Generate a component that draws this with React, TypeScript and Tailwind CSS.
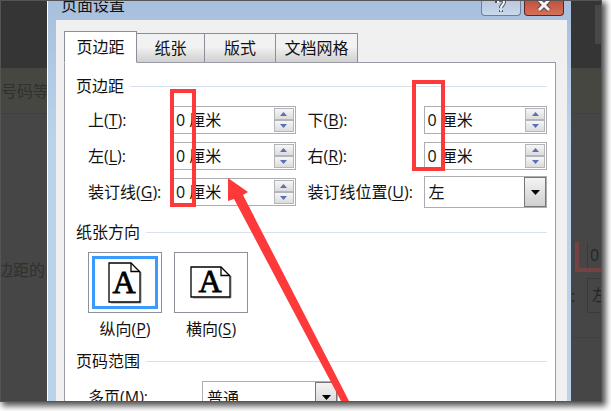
import { useState, type ReactNode } from "react";

const FONT = "font-['Open_Sans','Noto_Sans_CJK_SC',sans-serif]";

function KeyLabel({ text, hot, colon = true }: { text: string; hot: string; colon?: boolean }) {
  return (
    <>
      {text}(<span className="underline underline-offset-2">{hot}</span>){colon ? ":" : ""}
    </>
  );
}

function Heading({ children }: { children: ReactNode }) {
  return (
    <div className="flex h-5 items-center gap-1.5">
      <h2 className="shrink-0">{children}</h2>
      <span className="h-px flex-1 bg-[#d9e2ea]" />
    </div>
  );
}

function StepButton({ up, name }: { up?: boolean; name: string }) {
  return (
    <button
      type="button"
      aria-label={name}
      className="flex flex-1 items-center justify-center border border-[#b4b5b8] bg-linear-to-b from-[#f6f6f6] to-[#dcdcde]"
    >
      <svg width="7" height="4" viewBox="0 0 7 4" fill="#5b6fb5">
        <path d={up ? "M3.5 0 7 4H0z" : "M0 0h7L3.5 4z"} />
      </svg>
    </button>
  );
}

function Spinner({ id }: { id: string }) {
  return (
    <div className="flex h-7 min-w-0 border border-[#abadb3] bg-white p-px">
      <input id={id} defaultValue="0 厘米" className="w-0 min-w-0 flex-1 bg-transparent pl-0.5 leading-6 outline-none" />
      <div className="flex w-5 shrink-0 flex-col">
        <StepButton up name="增加" />
        <StepButton name="减少" />
      </div>
    </div>
  );
}

function Dropdown({ id, value, options }: { id: string; value: string; options: string[] }) {
  return (
    <div className="relative h-8 border border-[#abadb3] bg-white">
      <select id={id} defaultValue={value} className="h-full w-full appearance-none bg-transparent pl-1 leading-6 outline-none">
        {options.map((o) => (
          <option key={o}>{o}</option>
        ))}
      </select>
      <span className="pointer-events-none absolute inset-y-0 right-0 flex w-[22px] items-center justify-center border border-[#777] bg-linear-to-b from-[#f4f4f4] to-[#cfcfcf]">
        <svg width="9" height="5" viewBox="0 0 9 5">
          <path d="M0 0h9L4.5 5z" />
        </svg>
      </span>
    </div>
  );
}

function PageIcon({ wide }: { wide?: boolean }) {
  const w = wide ? 42 : 34;
  const h = wide ? 33 : 42;
  return (
    <svg width={w} height={h} viewBox={`0 0 ${w} ${h}`} fill="none">
      <path d={`M3 ${h - 1}H${w - 1}V10`} stroke="#999" />
      <path d={`M1 1H${w - 11}L${w - 2} 10V${h - 2}H1z`} fill="#fff" stroke="#000" strokeWidth="1.3" />
      <path d={`M${w - 11} 1V9.500H${w - 2}`} stroke="#000" strokeWidth="1.3" />
      <text
        x={w / 2 - 1}
        y={wide ? 26 : 31}
        textAnchor="middle"
        fontSize="32"
        fill="#000"
        stroke="#000"
        strokeWidth="0.8"
        className="font-['Liberation_Serif',serif]"
      >
        A
      </text>
    </svg>
  );
}

function Orientation({ wide, selected, text, hot, onPick }: { wide?: boolean; selected: boolean; text: string; hot: string; onPick: () => void }) {
  return (
    <button type="button" aria-pressed={selected} onClick={onPick} className="flex w-[74px] flex-col items-center gap-1.5">
      <span className="flex h-[61px] w-full border border-[#8e9199] p-[3px]">
        <span className={`flex flex-1 items-center justify-center border-[3px] ${selected ? "border-[#3a9bfd]" : "border-transparent"}`}>
          <PageIcon wide={wide} />
        </span>
      </span>
      <span className="h-5 leading-5">
        <KeyLabel text={text} hot={hot} colon={false} />
      </span>
    </button>
  );
}

function Tab({ text, width, active, onPick }: { text: string; width: string; active: boolean; onPick: () => void }) {
  return (
    <button
      type="button"
      role="tab"
      aria-selected={active}
      onClick={onPick}
      className={`${width} border border-[#8b8e98] ${
        active ? "-mb-px h-8 border-b-white bg-white" : "h-[29px] border-b-0 border-l-0 bg-linear-to-b from-[#f2f2f2] from-45% to-[#d0d0d0]"
      }`}
    >
      {text}
    </button>
  );
}

const TABS = [
  { text: "页边距", width: "w-[73px]" },
  { text: "纸张", width: "w-[68px]" },
  { text: "版式", width: "w-[71px]" },
  { text: "文档网格", width: "w-[82px]" },
];

export default function App() {
  const [tab, setTab] = useState("页边距");
  const [wide, setWide] = useState(false);

  return (
    <div className={`h-screen overflow-hidden bg-white pr-[9px] pb-[9px] text-base text-[#111] ${FONT}`}>
      <div className="relative flex h-full border border-[#555] shadow-[3px_3px_6px_1px_#555]">
        <div className="flex w-[46px] shrink-0 flex-col overflow-hidden bg-[#464646] text-[#303030]">
          <div className="h-[67px] shrink-0 bg-[#353535]" />
          <div className="flex h-[45px] shrink-0 items-center bg-[#464740] whitespace-nowrap">号码等</div>
          <div className="flex h-[167px] shrink-0 items-end border-t border-[#404040] whitespace-nowrap">
            <span className="-ml-1 leading-5">边距的</span>
          </div>
        </div>

        <main className="flex min-w-0 flex-1 flex-col overflow-hidden border-l border-white bg-linear-to-b from-[#a8bfdd] to-[#bbd3ea] to-[140px] pr-1 pl-2">
          <header className="flex h-[19px] shrink-0 items-start justify-between pr-[3px] pl-[5px]">
            <h1 className="leading-[8px]">页面设置</h1>
            <div className="flex gap-[3px]">
              <button
                type="button"
                aria-label="帮助"
                className="flex h-[15px] w-10 justify-center rounded-b-sm border border-t-0 border-[#6f7f96] bg-linear-to-b from-[#b9c8de] to-[#c9d8ea]"
              >
                <svg width="12" height="13" viewBox="0 0 12 13" fill="none">
                  <path d="M2 0V2M3 1C3-2 9-2 9 1C9 4 6 4 6 7M6 9v2" stroke="#4b5565" strokeWidth="4" />
                  <path d="M3 2V1C3-2 9-2 9 1C9 4 6 4 6 7M6 8.500v2" stroke="#f5f5f5" strokeWidth="2" />
                </svg>
              </button>
              <button
                type="button"
                aria-label="关闭"
                className="flex h-[15px] w-10 justify-center rounded-b-sm border border-t-0 border-[#5c2526] bg-linear-to-b from-[#c3513b] to-[#d5705a]"
              >
                <svg width="14" height="13" viewBox="0 0 14 13" fill="none">
                  <path d="M2-1 12 9M12-1 2 9" stroke="#5b4247" strokeWidth="5" />
                  <path d="M2-1 12 9M12-1 2 9" stroke="#f5f5f5" strokeWidth="3" />
                </svg>
              </button>
            </div>
          </header>

          <div className="flex min-h-0 flex-1 flex-col bg-[#f0f0f0] pt-[11px] pr-[11px] pl-2">
            <div role="tablist" className="relative z-10 flex h-[31px] shrink-0 items-end">
              {TABS.map((t) => (
                <Tab key={t.text} {...t} active={t.text === tab} onPick={() => setTab(t.text)} />
              ))}
            </div>

            <section className="min-h-0 flex-1 overflow-hidden border border-b-0 border-[#9a9ca5] bg-white pt-[13px] pr-2 pl-[11px]">
              <Heading>页边距</Heading>
              <div className="mt-2.5 grid grid-cols-[84px_minmax(0,1fr)_128px_minmax(0,1fr)] gap-y-2 pl-3 leading-7">
                <label htmlFor="top"><KeyLabel text="上" hot="T" /></label>
                <Spinner id="top" />
                <label htmlFor="bottom" className="pl-3"><KeyLabel text="下" hot="B" /></label>
                <Spinner id="bottom" />
                <label htmlFor="left"><KeyLabel text="左" hot="L" /></label>
                <Spinner id="left" />
                <label htmlFor="right" className="pl-3"><KeyLabel text="右" hot="R" /></label>
                <Spinner id="right" />
                <label htmlFor="gutter" className="whitespace-nowrap"><KeyLabel text="装订线" hot="G" /></label>
                <Spinner id="gutter" />
                <label htmlFor="gutter-side" className="pl-3 whitespace-nowrap"><KeyLabel text="装订线位置" hot="U" /></label>
                <div className="-my-0.5">
                  <Dropdown id="gutter-side" value="左" options={["左", "上"]} />
                </div>
              </div>

              <div className="mt-4">
                <Heading>纸张方向</Heading>
              </div>
              <div className="mt-2.5 flex gap-3 pl-3">
                <Orientation text="纵向" hot="P" selected={!wide} onPick={() => setWide(false)} />
                <Orientation wide text="横向" hot="S" selected={wide} onPick={() => setWide(true)} />
              </div>

              <div className="mt-3">
                <Heading>页码范围</Heading>
              </div>
              <div className="mt-2.5 flex pl-3 leading-8">
                <label htmlFor="pages" className="w-[114px]"><KeyLabel text="多页" hot="M" /></label>
                <div className="w-[136px]">
                  <Dropdown id="pages" value="普通" options={["普通", "对称页边距"]} />
                </div>
              </div>
            </section>
          </div>
        </main>

        <div className="flex w-[30px] shrink-0 flex-col overflow-hidden bg-[#464646] text-[#252525]">
          <div className="flex h-[67px] shrink-0 justify-end bg-[#353535] pt-1">
            <span className="h-[39px] w-1.5 bg-[#484848]" />
          </div>
          <div className="h-[45px] shrink-0 bg-[#464740]" />
          <div className="h-[129px] shrink-0 border-t border-[#404040]" />
          <div className="ml-1 flex h-[30px] shrink-0 border-b-4 border-l-4 border-[#744243] pl-2">
            <span className="flex-1 border-l border-[#3a3a3a] pl-0.5 leading-[26px]">0</span>
          </div>
          <div className="mt-1.5 flex h-[35px] shrink-0 items-center">
            <span className="w-4">:</span>
            <span className="h-full flex-1 overflow-hidden border border-r-0 border-[#3a3a3a] pl-1 leading-8">左</span>
          </div>
          <div className="mt-6 border-t border-[#404040]" />
        </div>

        <div className="pointer-events-none absolute top-[88px] left-[169px] h-[118px] w-[26px] border-4 border-[#fd3939]" />
        <div className="pointer-events-none absolute top-[79px] left-[411px] h-[91px] w-[33px] border-4 border-[#fd3939]" />
        <svg className="pointer-events-none absolute top-[177px] left-[227px]" width="122" height="223" viewBox="0 0 122 223" fill="#fd3939">
          <path d="M0 0 20 14 15 17 121 223H113L6 21 0 23z" />
        </svg>
      </div>
    </div>
  );
}
